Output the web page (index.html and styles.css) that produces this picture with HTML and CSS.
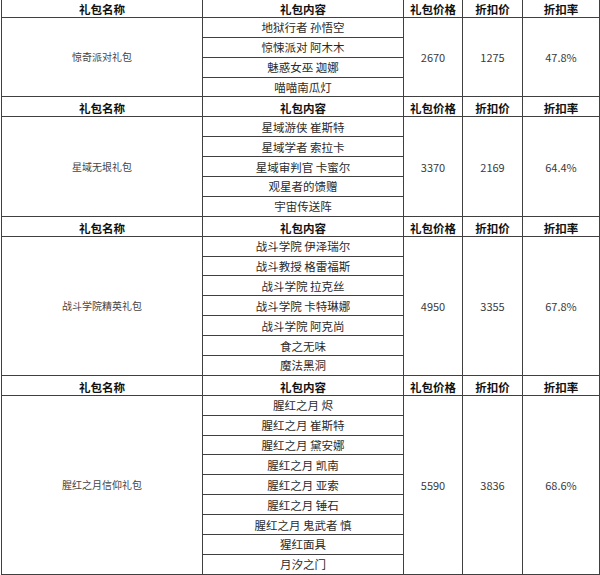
FILE: index.html
```html
<!DOCTYPE html>
<html lang="zh-CN">
<head>
<meta charset="utf-8">
<title>礼包</title>
<link rel="stylesheet" href="styles.css">
</head>
<body>
<table class="gift">
  <colgroup>
    <col class="c-name"><col class="c-items"><col class="c-price"><col class="c-disc"><col class="c-rate">
  </colgroup>
  <tbody>
    <tr class="head"><th>礼包名称</th><th>礼包内容</th><th>礼包价格</th><th>折扣价</th><th>折扣率</th></tr>
    <tr><td class="name" rowspan="4">惊奇派对礼包</td><td class="item">地狱行者 孙悟空</td><td class="num" rowspan="4">2670</td><td class="num" rowspan="4">1275</td><td class="num" rowspan="4">47.8%</td></tr>
    <tr><td class="item">惊悚派对 阿木木</td></tr>
    <tr><td class="item">魅惑女巫 迦娜</td></tr>
    <tr><td class="item">喵喵南瓜灯</td></tr>

    <tr class="head"><th>礼包名称</th><th>礼包内容</th><th>礼包价格</th><th>折扣价</th><th>折扣率</th></tr>
    <tr><td class="name" rowspan="5">星域无垠礼包</td><td class="item">星域游侠 崔斯特</td><td class="num" rowspan="5">3370</td><td class="num" rowspan="5">2169</td><td class="num" rowspan="5">64.4%</td></tr>
    <tr><td class="item">星域学者 索拉卡</td></tr>
    <tr><td class="item">星域审判官 卡蜜尔</td></tr>
    <tr><td class="item">观星者的馈赠</td></tr>
    <tr><td class="item">宇宙传送阵</td></tr>

    <tr class="head"><th>礼包名称</th><th>礼包内容</th><th>礼包价格</th><th>折扣价</th><th>折扣率</th></tr>
    <tr><td class="name" rowspan="7">战斗学院精英礼包</td><td class="item">战斗学院 伊泽瑞尔</td><td class="num" rowspan="7">4950</td><td class="num" rowspan="7">3355</td><td class="num" rowspan="7">67.8%</td></tr>
    <tr><td class="item">战斗教授 格雷福斯</td></tr>
    <tr><td class="item">战斗学院 拉克丝</td></tr>
    <tr><td class="item">战斗学院 卡特琳娜</td></tr>
    <tr><td class="item">战斗学院 阿克尚</td></tr>
    <tr><td class="item">食之无味</td></tr>
    <tr><td class="item">魔法黑洞</td></tr>

    <tr class="head"><th>礼包名称</th><th>礼包内容</th><th>礼包价格</th><th>折扣价</th><th>折扣率</th></tr>
    <tr><td class="name" rowspan="9">腥红之月信仰礼包</td><td class="item">腥红之月 烬</td><td class="num" rowspan="9">5590</td><td class="num" rowspan="9">3836</td><td class="num" rowspan="9">68.6%</td></tr>
    <tr><td class="item">腥红之月 崔斯特</td></tr>
    <tr><td class="item">腥红之月 黛安娜</td></tr>
    <tr><td class="item">腥红之月 凯南</td></tr>
    <tr><td class="item">腥红之月 亚索</td></tr>
    <tr><td class="item">腥红之月 锤石</td></tr>
    <tr><td class="item">腥红之月 鬼武者 慎</td></tr>
    <tr><td class="item">猩红面具</td></tr>
    <tr><td class="item">月汐之门</td></tr>
  </tbody>
</table>
</body>
</html>
```

FILE: styles.css
```css
html, body {
  margin: 0;
  padding: 0;
  background: #ffffff;
}

body {
  font-family: "Noto Sans CJK SC", "Noto Sans", sans-serif;
  color: #333333;
  overflow: hidden;
}

.gift {
  border-collapse: collapse;
  table-layout: fixed;
  width: 598px;
  margin: -3px 0 0 1px;
  border: 1px solid #404040;
}

.c-name { width: 201px; }
.c-items { width: 201px; }
.c-price { width: 59px; }
.c-disc { width: 60px; }
.c-rate { width: 77px; }

.gift th,
.gift td {
  border: 1px solid #404040;
  padding: 0;
  height: 17px;
  text-align: center;
  white-space: nowrap;
  overflow: hidden;
}

.gift tr {
  height: 19.9px;
}

.gift th {
  font-size: 11.5px;
  font-weight: 700;
  color: #111111;
  line-height: 14px;
  vertical-align: bottom;
  padding-bottom: 1px;
}

.gift td.item {
  font-size: 11.5px;
  line-height: 14px;
  color: #2a2a2a;
}

.gift td.name {
  font-size: 10px;
  line-height: 14px;
  color: #444444;
}

.gift td.num {
  font-size: 11px;
  line-height: 14px;
  color: #3a3a3a;
}
```
